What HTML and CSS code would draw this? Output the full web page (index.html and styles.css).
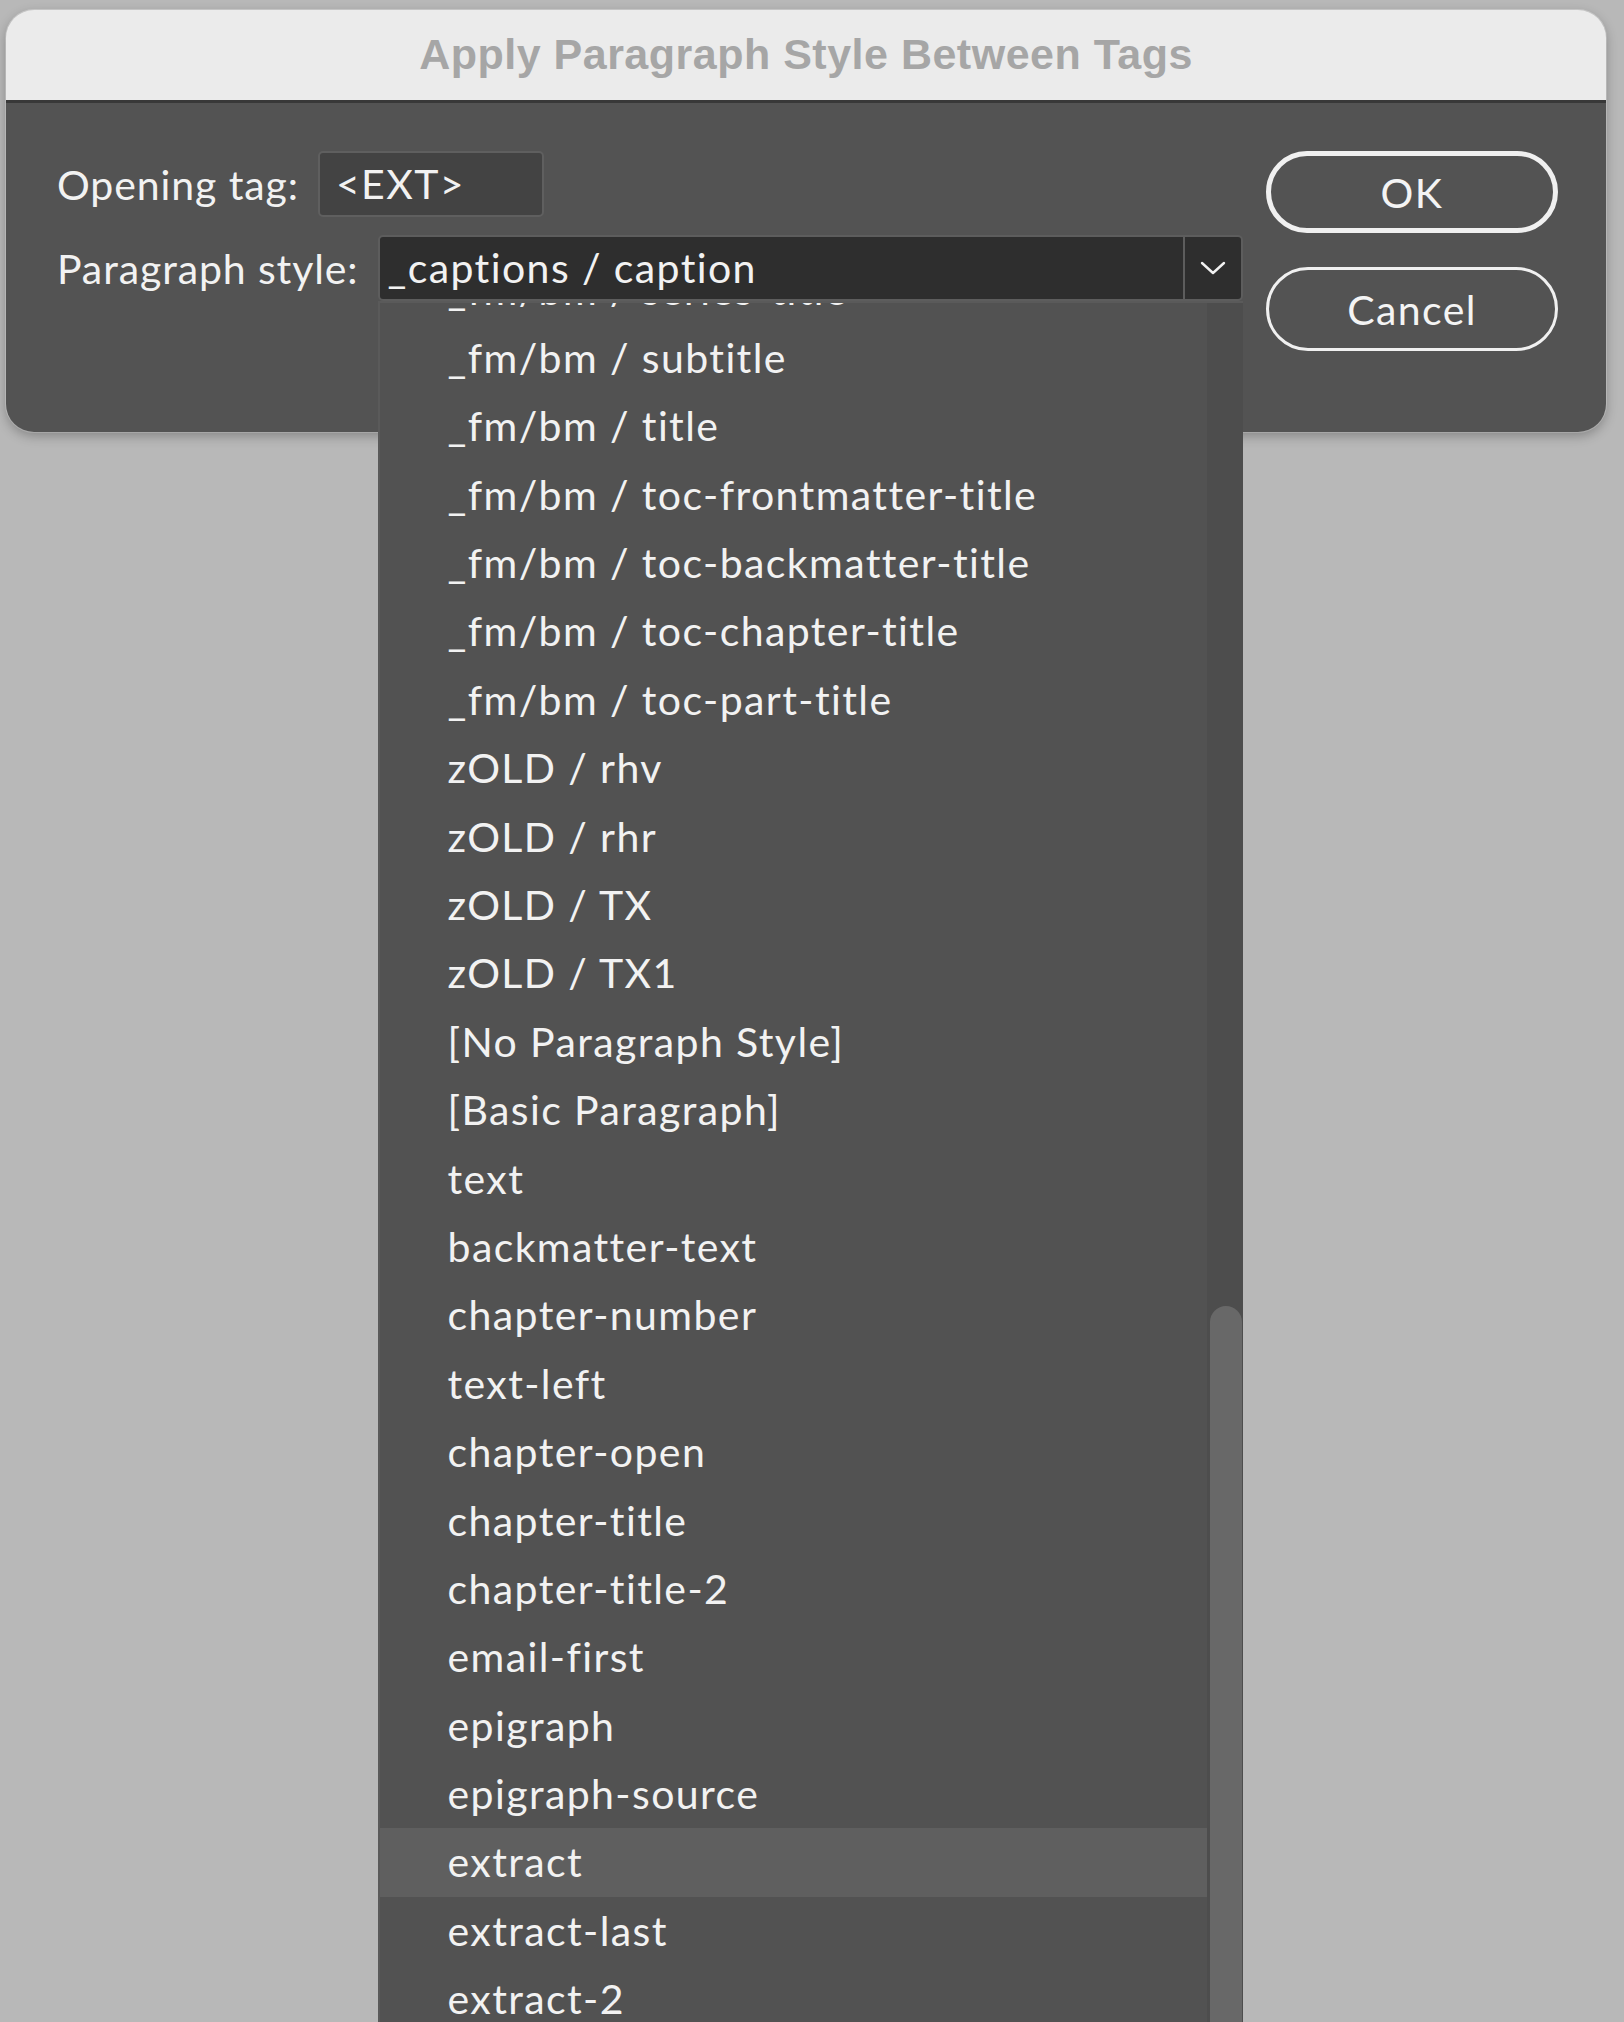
FILE: index.html
```html
<!doctype html>
<html lang="en">
<head>
	<meta charset="UTF-8">
	<title>Apply Paragraph Style Between Tags</title>
	<link rel="stylesheet" href="styles.css">
</head>
<body>
	<div class="dialog">
		<div class="titlebar">Apply Paragraph Style Between Tags</div>
		<div class="dialog-body">
			<div class="fields">
				<div class="field">
					<span class="label">Opening tag:</span>
					<span class="textbox">&lt;EXT&gt;</span>
				</div>
				<div class="field">
					<span class="label">Paragraph style:</span>
					<div class="select">
						<div class="select-box">
							<span class="select-value">_captions / caption</span>
							<span class="select-arrow">
								<svg width="26" height="14" viewBox="0 0 26 14"><polyline points="2,2 13,12 24,2" fill="none" stroke="#f2f2f2" stroke-width="2.4" stroke-linecap="round" stroke-linejoin="round"/></svg>
							</span>
						</div>
						<div class="dropdown">
							<ul class="options">
								<li>_fm/bm / series-title</li>
								<li>_fm/bm / subtitle</li>
								<li>_fm/bm / title</li>
								<li>_fm/bm / toc-frontmatter-title</li>
								<li>_fm/bm / toc-backmatter-title</li>
								<li>_fm/bm / toc-chapter-title</li>
								<li>_fm/bm / toc-part-title</li>
								<li>zOLD / rhv</li>
								<li>zOLD / rhr</li>
								<li>zOLD / TX</li>
								<li>zOLD / TX1</li>
								<li>[No Paragraph Style]</li>
								<li>[Basic Paragraph]</li>
								<li>text</li>
								<li>backmatter-text</li>
								<li>chapter-number</li>
								<li>text-left</li>
								<li>chapter-open</li>
								<li>chapter-title</li>
								<li>chapter-title-2</li>
								<li>email-first</li>
								<li>epigraph</li>
								<li>epigraph-source</li>
								<li class="hover">extract</li>
								<li>extract-last</li>
								<li>extract-2</li>
							</ul>
							<div class="scrolltrack"><div class="thumb"></div></div>
						</div>
					</div>
				</div>
			</div>
			<div class="buttons">
				<button class="btn btn-default">OK</button>
				<button class="btn">Cancel</button>
			</div>
		</div>
	</div>
</body>
</html>
```

FILE: styles.css
```css
* { margin: 0; padding: 0; box-sizing: border-box;}
html, body { height: 2022px; overflow: hidden;}
body { background: #b8b8b8; font-family: "Lato", "Noto Sans", sans-serif; font-size: 41px; color: #f2f2f2; letter-spacing: 1.4px; padding: 10px 0 0 6px;}
li { list-style: none;}

.dialog { width: 1600px; border-radius: 28px; box-shadow: 0 4px 12px rgba(0,0,0,.28), 0 0 0 1px rgba(255,255,255,.35);}
.titlebar { height: 93px; background: #ebebeb; border-bottom: 3px solid #383838; border-radius: 28px 28px 0 0; font-family: "Liberation Sans", Arial, sans-serif; font-weight: bold; font-size: 43px; letter-spacing: 0.5px; color: #a6a6a6; text-align: center; line-height: 88px;}
.dialog-body { height: 329px; background: #535353; border-radius: 0 0 28px 28px; display: flex; justify-content: space-between; padding: 48px 48px 0 51px;}

.fields { display: flex; flex-direction: column; gap: 18px;}
.field { display: flex; align-items: center; gap: 19px; height: 66px;}
.label { white-space: nowrap; letter-spacing: 0.9px;}
.textbox { width: 226px; height: 66px; background: #434343; border: 2px solid #5f5f5f; border-radius: 5px; padding-left: 16px; line-height: 62px;}

.select { position: relative; width: 865px;}
.select-box { height: 66px; display: flex; background: #2e2e2e; border: 2px solid #5d5d5d; border-radius: 5px;}
.select-value { flex: 1; padding-left: 8px; line-height: 62px; white-space: nowrap;}
.select-arrow { width: 58px; border-left: 2px solid #5d5d5d; display: flex; align-items: center; justify-content: center;}

.dropdown { position: absolute; top: 100%; left: 0; width: 865px; height: 1740px; display: flex; overflow: hidden; background: #525252; border-left: 2px solid #5a5a5a; border-top: 2px solid #5a5a5a;}
.options { flex: 1; margin-top: -47.5px;}
.options li { height: 68.4px; line-height: 68.4px; padding-left: 68px; white-space: nowrap;}
.options li.hover { background: #5f5f5f;}
.scrolltrack { width: 36px; background: #4d4d4d; padding: 1003px 1px 0 3px;}
.thumb { width: 32px; height: 900px; border-radius: 16px; background: #686868;}

.buttons { display: flex; flex-direction: column; gap: 34px;}
.btn { width: 292px; height: 84px; border-radius: 42px; background: transparent; border: 3px solid #f0f0f0; color: #f4f4f4; font-family: inherit; font-size: 41px; letter-spacing: 1.4px;}
.btn-default { border-width: 5px; height: 82px;}
```
